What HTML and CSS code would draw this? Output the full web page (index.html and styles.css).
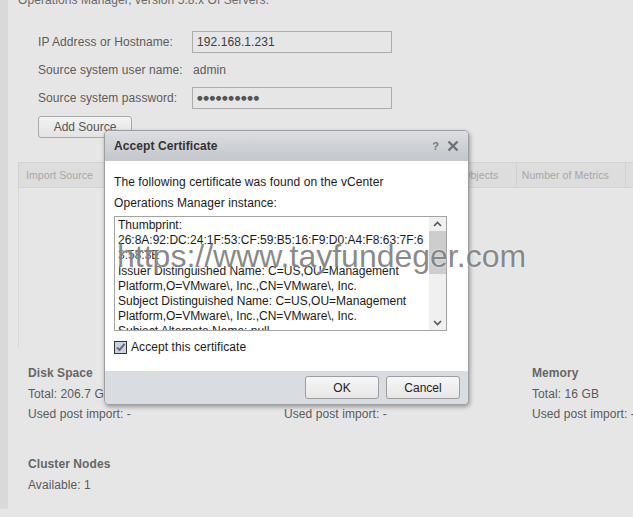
FILE: index.html
```html
<!DOCTYPE html>
<html>
<head>
<meta charset="utf-8">
<link rel="stylesheet" href="styles.css">
</head>
<body>
<div class="page">
  <p class="intro">Operations Manager, version 5.8.x Of Servers.</p>
  <div class="form">
    <div class="label">IP Address or Hostname:</div><div class="input">192.168.1.231</div>
    <div class="label">Source system user name:</div><div class="value">admin</div>
    <div class="label">Source system password:</div><div class="input pw">●●●●●●●●●●</div>
  </div>
  <button class="btn add">Add Source</button>
  <div class="table">
    <div class="thead">
      <div class="th c1">Import Source</div>
      <div class="th c2">Version</div>
      <div class="th c3">Number of Objects</div>
      <div class="th c4">Number of Metrics</div>
      <div class="th c5"></div>
    </div>
    <div class="tbody"></div>
  </div>
  <div class="stats">
    <div class="stat"><div class="sh">Disk Space</div><div>Total: 206.7 GB</div><div>Used post import: -</div></div>
    <div class="stat"><div class="sh">CPU</div><div>Total: 8 vCPU</div><div>Used post import: -</div></div>
    <div class="stat"><div class="sh">Memory</div><div>Total: 16 GB</div><div>Used post import: -</div></div>
  </div>
  <div class="cluster">
    <div class="sh">Cluster Nodes</div>
    <div>Available: 1</div>
  </div>
</div>

<div class="dialog">
  <div class="dhead">
    <span class="dtitle">Accept Certificate</span>
    <span class="dtools"><span class="help">?</span>
      <svg class="close" width="12" height="12" viewBox="0 0 12 12"><path d="M1.5 1.5 L10.5 10.5 M10.5 1.5 L1.5 10.5" stroke="#6f7277" stroke-width="2.4" fill="none"/></svg>
    </span>
  </div>
  <div class="dbody">
    <p class="msg">The following certificate was found on the vCenter</p>
    <p class="msg m2">Operations Manager instance:</p>
    <div class="certbox">
      <div class="certtext">Thumbprint:<br>26:8A:92:DC:24:1F:53:CF:59:B5:16:F9:D0:A4:F8:63:7F:63:58:3E<br>Issuer Distinguished Name: C=US,OU=Management Platform,O=VMware\, Inc.,CN=VMware\, Inc.<br>Subject Distinguished Name: C=US,OU=Management Platform,O=VMware\, Inc.,CN=VMware\, Inc.<br>Subject Alternate Name: null</div>
      <div class="scrollbar">
        <svg width="17" height="14" viewBox="0 0 17 14"><path d="M5 9 L8.5 5.5 L12 9" stroke="#555" stroke-width="1.6" fill="none"/></svg>
        <div class="thumb"></div>
        <div class="track"></div>
        <svg width="17" height="14" viewBox="0 0 17 14"><path d="M5 5 L8.5 8.5 L12 5" stroke="#555" stroke-width="1.6" fill="none"/></svg>
      </div>
    </div>
    <label class="check">
      <span class="box"><svg width="11" height="11" viewBox="0 0 11 11"><path d="M2 5.5 L4.5 8 L9.5 2" stroke="#6b6b6b" stroke-width="2" fill="none"/></svg></span>
      Accept this certificate
    </label>
  </div>
  <div class="dfoot">
    <button class="btn dbtn">OK</button>
    <button class="btn dbtn">Cancel</button>
  </div>
</div>

<div class="watermark">https://www.tayfundeger.com</div>
</body>
</html>
```

FILE: styles.css
```css
html, body {
  margin: 0;
  padding: 0;
  height: 100%;
  overflow: hidden;
}
body {
  font-family: "Liberation Sans", Arial, sans-serif;
  font-size: 12px;
  letter-spacing: 0.08px;
  color: #5a5a5a;
  background: #e6e6e6;
  position: relative;
}
.page {
  border-left: 8px solid #d9d9d9;
  padding-left: 10px;
  height: 517px;
  box-sizing: border-box;
  background: #e6e6e6;
}
.intro {
  margin: -8px 0 0 0;
  line-height: 16px;
  color: #6a6a6a;
}
.form {
  margin: 20px 0 0 20px;
  display: grid;
  grid-template-columns: 154px 200px;
  grid-auto-rows: 28px;
  align-items: center;
}
.label, .value {
  line-height: 16px;
  color: #5c5c5c;
}
.value { padding-left: 1px; }
.input {
  height: 22px;
  box-sizing: border-box;
  border: 1px solid #acacac;
  padding: 0 0 0 4px;
  line-height: 20px;
  color: #3c3c3c;
}
.pw {
  font-family: "DejaVu Sans", sans-serif;
  font-size: 6.5px;
  letter-spacing: 0.6px;
  color: #555;
}
.btn {
  font-family: "Liberation Sans", Arial, sans-serif;
  font-size: 12px;
  border: 1px solid #a9a9a9;
  border-radius: 3px;
  background: linear-gradient(#f3f3f3, #e3e3e3);
  color: #555;
  padding: 0;
}
.add {
  display: block;
  margin: 4px 0 0 20px;
  width: 94px;
  height: 22px;
}
.table {
  margin-top: 24px;
}
.thead {
  display: flex;
  height: 26px;
  box-sizing: border-box;
  border-top: 1px solid #d2d2d2;
  border-bottom: 1px solid #d2d2d2;
  background: #dddddd;
}
.th {
  box-sizing: border-box;
  border-left: 1px solid #d2d2d2;
  padding-left: 7px;
  line-height: 24px;
  font-size: 10.5px;
  color: #a6a6a6;
  white-space: nowrap;
  overflow: hidden;
}
.c1 { width: 150px; }
.c2 { width: 236px; }
.c3 { width: 115px; }
.c4 { width: 110px; padding-left: 5px; }
.c5 { flex: 1; }
.tbody {
  height: 160px;
  border-left: 1px solid #d8d8d8;
}
.stats {
  margin: 15px 0 0 10px;
  display: grid;
  grid-template-columns: 256px 248px 1fr;
  line-height: 20.5px;
  white-space: nowrap;
}
.sh {
  font-weight: bold;
  color: #666;
}
.cluster {
  margin: 29px 0 0 10px;
  line-height: 21px;
}

/* dialog */
.dialog {
  position: absolute;
  left: 104px;
  top: 130px;
  width: 365px;
  box-sizing: border-box;
  border: 1px solid #9c9ea1;
  border-radius: 5px;
  overflow: hidden;
  background: #fff;
  box-shadow: 1px 2px 4px rgba(0,0,0,0.35);
  color: #1a1a1a;
}
.dhead {
  height: 30px;
  background: linear-gradient(#dcdee1, #c3c6ca);
  display: flex;
  align-items: center;
  justify-content: space-between;
  padding: 0 9px;
}
.dtitle {
  font-weight: bold;
  font-size: 12px;
  color: #333;
}
.dtools {
  display: flex;
  align-items: center;
  gap: 8px;
}
.help {
  font-weight: bold;
  font-size: 11px;
  color: #777;
}
.dbody {
  height: 210px;
  box-sizing: border-box;
  padding: 14px 9px 0 9px;
}
.msg {
  margin: 0;
  line-height: 15px;
}
.m2 { margin-top: 6px; }
.certbox {
  margin-top: 5px;
  width: 333px;
  height: 115px;
  box-sizing: border-box;
  border: 1px solid #a3a3a3;
  display: flex;
  overflow: hidden;
}
.certtext {
  flex: 1;
  padding: 1px 2px 0 3px;
  line-height: 15.2px;
  letter-spacing: 0;
  overflow-wrap: anywhere;
  overflow: hidden;
}
.scrollbar {
  width: 17px;
  background: #f0f0f0;
  display: flex;
  flex-direction: column;
}
.thumb {
  height: 43px;
  background: #cdcdcd;
}
.track { flex: 1; }
.check {
  display: flex;
  align-items: center;
  gap: 4px;
  margin-top: 9px;
  line-height: 14px;
}
.box {
  width: 13px;
  height: 13px;
  box-sizing: border-box;
  border: 1px solid #333;
  background: #c6d3ea;
  display: flex;
  align-items: center;
  justify-content: center;
}
.dfoot {
  height: 33px;
  background: #d9dde2;
  display: flex;
  align-items: center;
  justify-content: flex-end;
  gap: 7px;
  padding-right: 8px;
}
.dbtn {
  width: 74px;
  height: 23px;
  color: #222;
  background: linear-gradient(#f7f7f7, #e6e6e6);
  border-color: #9d9d9d;
}

.watermark {
  position: absolute;
  left: 117px;
  top: 240px;
  font-family: "Liberation Sans", Arial, sans-serif;
  font-size: 32px;
  line-height: 32px;
  letter-spacing: 0;
  color: rgba(105,105,105,0.78);
  text-shadow: 0 0 2px rgba(255,255,255,0.9);
  white-space: nowrap;
  pointer-events: none;
}
```
